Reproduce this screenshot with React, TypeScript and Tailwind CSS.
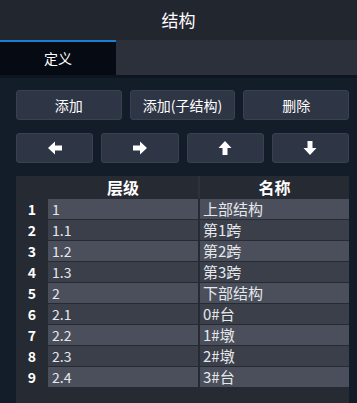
import React from "react";

const font = { fontFamily: '"Noto Sans CJK SC", "Noto Sans", sans-serif' };

const rows: [string, string, string][] = [
  ["1", "1", "上部结构"],
  ["2", "1.1", "第1跨"],
  ["3", "1.2", "第2跨"],
  ["4", "1.3", "第3跨"],
  ["5", "2", "下部结构"],
  ["6", "2.1", "0#台"],
  ["7", "2.2", "1#墩"],
  ["8", "2.3", "2#墩"],
  ["9", "2.4", "3#台"],
];

function Arrow({ dir }: { dir: "left" | "right" | "up" | "down" }) {
  const rot = { left: 180, right: 0, up: -90, down: 90 }[dir];
  return (
    <svg width="16" height="16" viewBox="0 0 16 16" style={{ transform: `rotate(${rot}deg)` }}>
      <polygon points="1,5.5 8,5.5 8,1.5 15,8 8,14.5 8,10.5 1,10.5" fill="#ffffff" />
    </svg>
  );
}

export default function App() {
  return (
    <div className="w-[357px] h-[403px] overflow-hidden bg-[#131d2a] flex flex-col" style={font}>
      <div className="h-[40px] bg-[#22262f] flex items-center justify-center text-white text-[17px]">
        结构
      </div>
      <div className="h-[35px] bg-[#2b303a] flex">
        <div className="w-[116px] bg-[#060b13] border-t-[2px] border-[#1e7fd0] flex items-center justify-center text-white text-[14px]">
          定义
        </div>
      </div>
      <div className="h-[3px] bg-[#0d1520]" />
      <div className="flex flex-col pl-[16px] pr-[8px] pt-[12px] flex-1 min-h-0">
        <div className="grid grid-cols-3 gap-[8px] h-[30px]">
          {["添加", "添加(子结构)", "删除"].map((t) => (
            <button
              key={t}
              className="bg-[#2e3545] border border-[#384052] rounded-[3px] text-white text-[14px] flex items-center justify-center"
            >
              {t}
            </button>
          ))}
        </div>
        <div className="grid grid-cols-4 gap-[8px] h-[30px] mt-[13px]">
          {(["left", "right", "up", "down"] as const).map((d) => (
            <button
              key={d}
              className="bg-[#2e3545] border border-[#384052] rounded-[3px] flex items-center justify-center"
            >
              <Arrow dir={d} />
            </button>
          ))}
        </div>
        <div className="mt-[13px] flex-1 bg-[#262a33] flex flex-col">
          <div className="flex h-[22px] text-white font-bold text-[16px]">
            <div className="w-[32px]" />
            <div className="w-[150px] flex items-center justify-center">层级</div>
            <div className="w-[2px] bg-[#2e323b]" />
            <div className="flex-1 flex items-center justify-center">名称</div>
          </div>
          <div className="flex flex-col gap-[1px] mt-[1px]">
            {rows.map(([i, lv, nm], idx) => {
              const bg = idx % 2 === 0 ? "bg-[#4a4f5b]" : "bg-[#3b3f4a]";
              return (
                <div key={i} className="flex h-[20px]">
                  <div className="w-[32px] flex items-center justify-center text-white font-bold text-[14px]">
                    {i}
                  </div>
                  <div className={`w-[150px] ${bg} flex items-center pl-[4px] text-[#e6e8ec] text-[14px]`}>
                    {lv}
                  </div>
                  <div className={`w-[149px] ml-[2px] ${bg} flex items-center pl-[3px] text-[#e6e8ec] text-[15px]`}>
                    {nm}
                  </div>
                </div>
              );
            })}
          </div>
        </div>
      </div>
    </div>
  );
}
